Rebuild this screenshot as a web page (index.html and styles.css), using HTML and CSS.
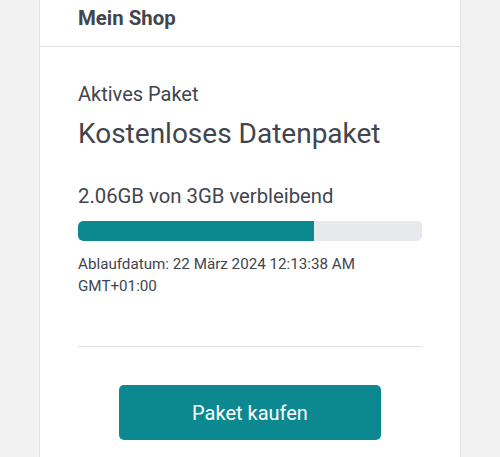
FILE: index.html
```html
<!DOCTYPE html>
<html>
	<head>
		<meta charset="utf-8">
		<title>Mein Shop</title>
		<link rel="stylesheet" href="styles.css">
	</head>
	<body>
		<div class="shop">
			<div class="shop-header">Mein Shop</div>
			<div class="paket">
				<div class="paket-label">Aktives Paket</div>
				<div class="paket-name">Kostenloses Datenpaket</div>
				<div class="paket-rest">2.06GB von 3GB verbleibend</div>
				<div class="balken">
					<div class="balken-fuellung" style="width: 68.7%"></div>
				</div>
				<div class="ablauf">Ablaufdatum: 22 März 2024 12:13:38 AM GMT+01:00</div>
				<hr class="trenner">
				<div class="aktionen">
					<button class="kaufen">Paket kaufen</button>
				</div>
			</div>
		</div>
	</body>
</html>
```

FILE: styles.css
```css
html, body {
	margin: 0;
	height: 100%;
}

body {
	background: #f2f2f2;
	font-family: Roboto, "Liberation Sans", sans-serif;
	color: #41454d;
	overflow: hidden;
}

.shop {
	width: 420px;
	min-height: 100%;
	margin: 0 auto;
	background: #fff;
	border-left: 1px solid #e2e2e2;
	border-right: 1px solid #e2e2e2;
}

.shop-header {
	box-sizing: border-box;
	height: 47px;
	padding: 6px 38px 0;
	font-size: 20.4px;
	font-weight: bold;
	line-height: 24px;
	border-bottom: 1px solid #e4e4e4;
}

.paket {
	padding: 35px 38px 0;
}

.paket-label {
	font-size: 20px;
	line-height: 24px;
}

.paket-name {
	margin-top: 11px;
	font-size: 28px;
	line-height: 34px;
}

.paket-rest {
	margin-top: 33px;
	font-size: 20.3px;
	line-height: 24px;
}

.balken {
	margin-top: 13px;
	height: 20px;
	border-radius: 5px;
	background: #e8e9ed;
	overflow: hidden;
}

.balken-fuellung {
	height: 100%;
	background: #0b8890;
	border-radius: 5px 0 0 5px;
}

.ablauf {
	margin-top: 12px;
	font-size: 15.2px;
	line-height: 22px;
}

.trenner {
	margin: 49px 0 0;
	border: 0;
	border-top: 1px solid #e0e0e0;
}

.aktionen {
	display: flex;
	justify-content: center;
	padding-top: 38px;
}

.kaufen {
	width: 262px;
	height: 55px;
	border: 0;
	border-radius: 5px;
	background: #0b8890;
	color: #fff;
	font-family: inherit;
	font-size: 20px;
}
```
